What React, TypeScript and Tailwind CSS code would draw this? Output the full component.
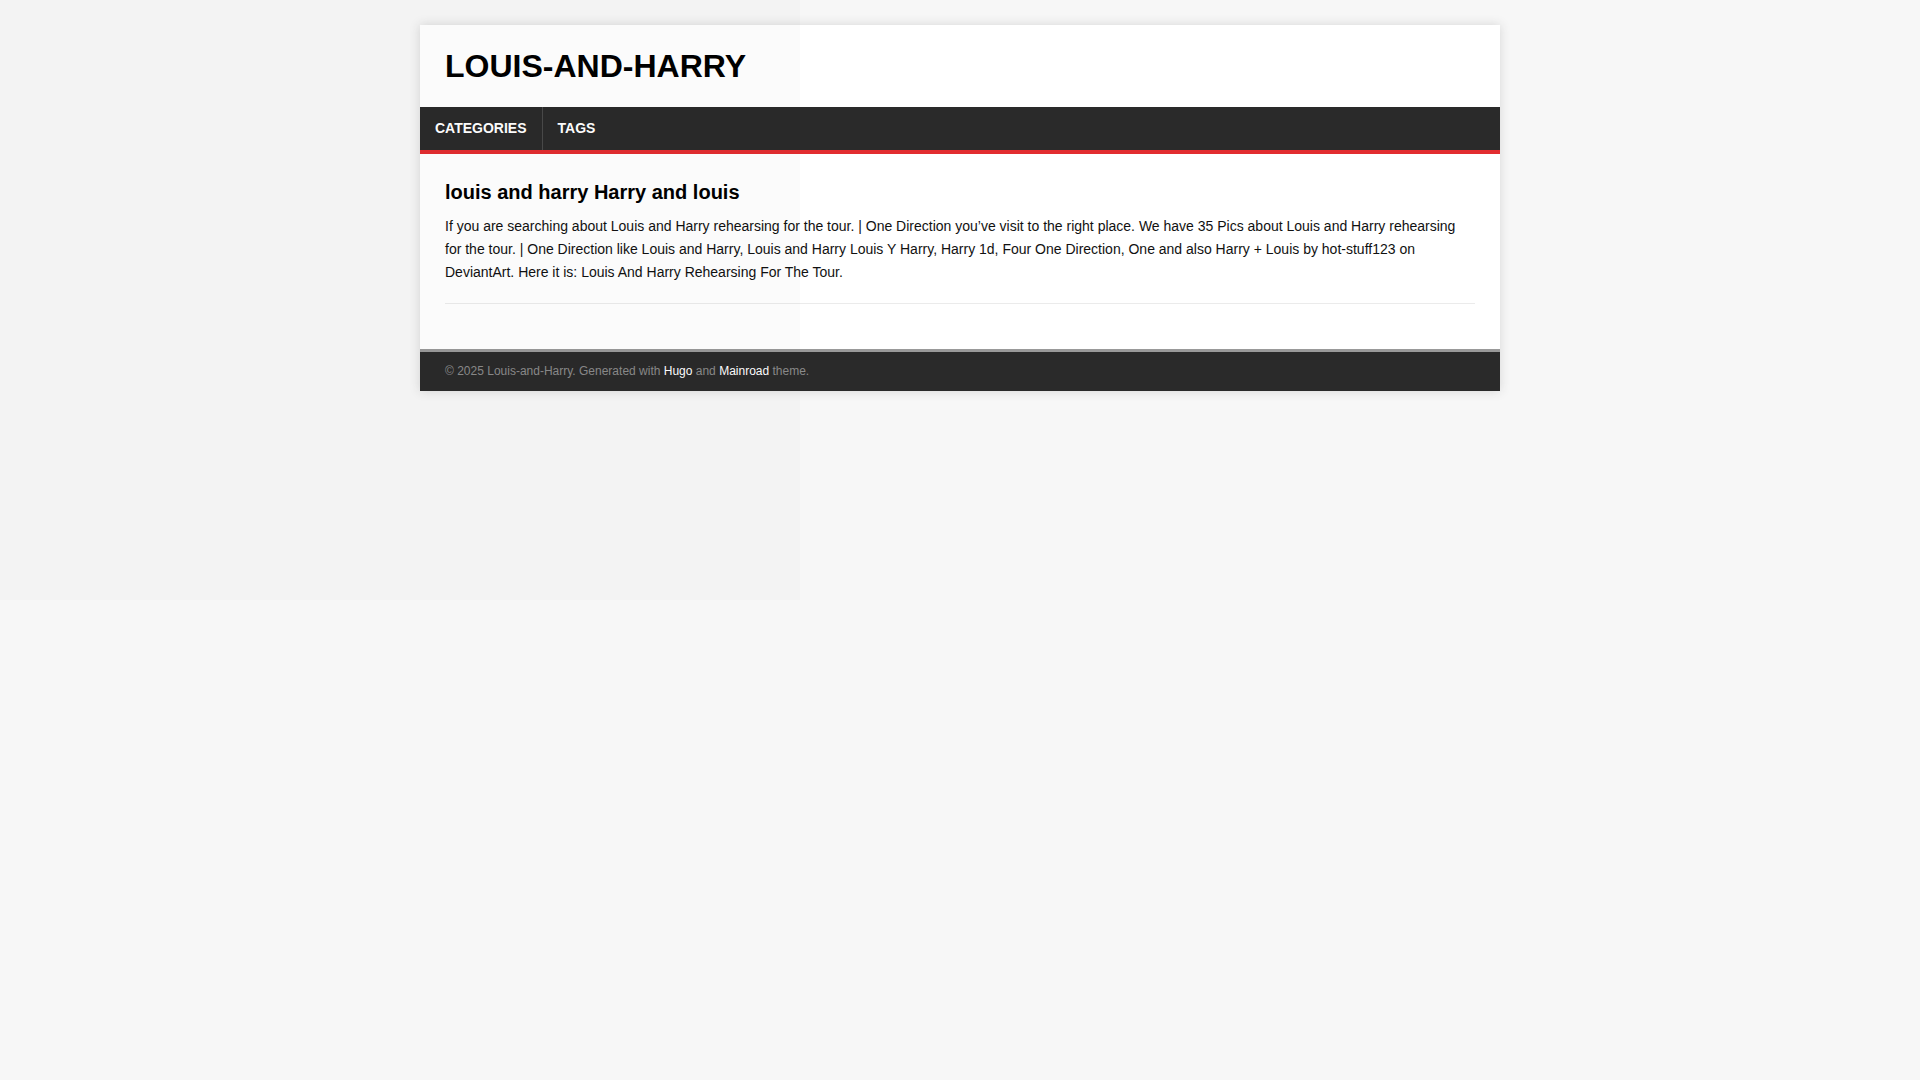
import React from 'react';

const nav = ['Categories', 'Tags'];

export default function App() {
  return (
    <div className="relative min-h-[1080px] bg-[#f7f7f7] pt-[25px] font-['Liberation_Sans',Arial,sans-serif] text-[#111]">
      <div className="mx-auto w-[1080px] bg-white shadow-[0_0_10px_rgba(50,50,50,0.17)]">
        {/* header */}
        <header className="p-[25px]">
          <div className="text-[32px] font-bold uppercase leading-[32px] text-black">Louis-and-Harry</div>
        </header>

        {/* menu */}
        <nav className="flex h-[47px] border-b-4 border-[#e22d30] bg-[#2a2a2a]">
          {nav.map((item, i) => (
            <a
              key={item}
              href="#"
              className={`flex items-center px-[15px] text-[14px] font-bold uppercase text-white ${i === 0 ? 'border-r border-[#4a4a4a]' : ''}`}
            >
              {item}
            </a>
          ))}
        </nav>

        {/* content */}
        <main className="p-[25px]">
          <article className="mb-[20px] border-b border-[#ebebeb] pb-[20px]">
            <h1 className="mb-[10px] text-[20px] font-bold leading-[26px] text-black">louis and harry Harry and louis</h1>
            <p className="text-[14px] leading-[22.8px]">
              If you are searching about Louis and Harry rehearsing for the tour. | One Direction you&#8217;ve visit to the right
              place. We have 35 Pics about Louis and Harry rehearsing for the tour. | One Direction like Louis and Harry,
              Louis and Harry Louis Y Harry, Harry 1d, Four One Direction, One and also Harry + Louis by hot-stuff123 on
              DeviantArt. Here it is: Louis And Harry Rehearsing For The Tour.
            </p>
          </article>
        </main>

        {/* footer */}
        <footer className="border-t-[3px] border-[#999] bg-[#2a2a2a] px-[25px] py-[12px] text-[12px] leading-[15px] text-[#8a8a8a]">
          &copy; 2025 Louis-and-Harry. Generated with{' '}
          <a href="#" className="text-white">Hugo</a> and{' '}
          <a href="#" className="text-white">Mainroad</a> theme.
        </footer>
      </div>

      {/* faint overlay seen in the top-left corner of the capture */}
      <div className="pointer-events-none absolute left-0 top-0 h-[600px] w-[800px] bg-[rgba(0,0,0,0.016)]" />
    </div>
  );
}
